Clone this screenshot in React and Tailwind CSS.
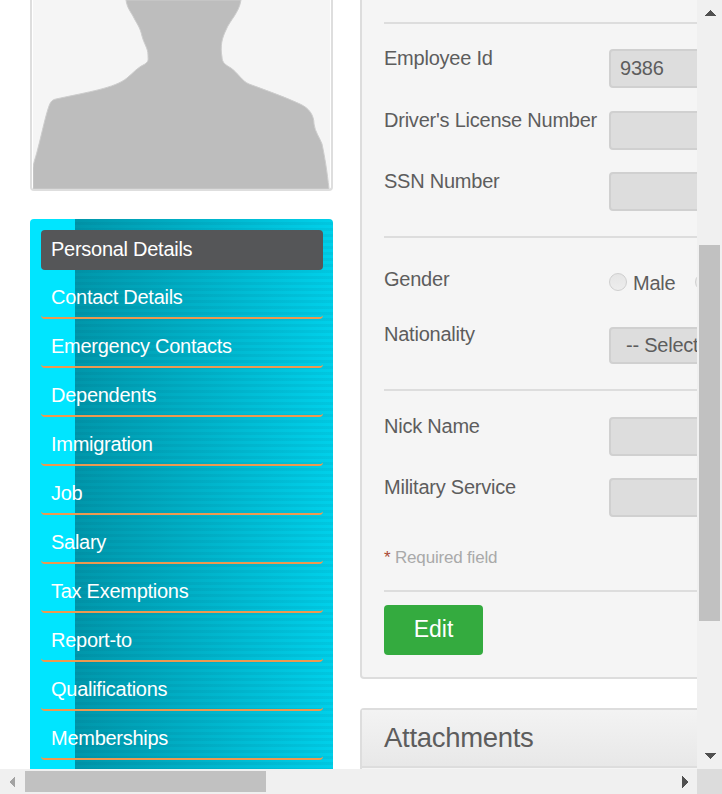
import React from "react";

const menu = [
  "Contact Details",
  "Emergency Contacts",
  "Dependents",
  "Immigration",
  "Job",
  "Salary",
  "Tax Exemptions",
  "Report-to",
  "Qualifications",
  "Memberships",
];

function Photo() {
  return (
    <div className="h-[191px] w-[303px] rounded-b-[4px] border-2 border-t-0 border-[#dedede] bg-white px-px">
      <svg width="297" height="189" viewBox="33 0 297 189" className="block" preserveAspectRatio="none">
        <rect x="33" y="0" width="298" height="189" fill="#f5f5f5" />
        <path
          d="M126 0C127 8 131 12 134 18C137 24 140 27 142 36C144 44 148 48 148 55C148 60 149 61 145 64C138 67 133 73 127 78C115 88 88 92 56 99C51 100 50 103 48 109C44 122 41 137 38 148C36 157 34 160 33 168V189H329C327 171 325 158 322 144C320 138 315 132 314 124C314 115 309 108 300 104C285 97 265 90 249 84C242 81 238 73 231 68C226 65 222 63 222 57C220 46 222 38 226 30C230 20 239 13 241 0Z"
          fill="#bdbdbd" stroke="#cdcdcd" strokeWidth="1"
        />
      </svg>
    </div>
  );
}

function Sidebar() {
  return (
    <nav className="mt-7 h-[600px] w-[303px] rounded-[4px] bg-[linear-gradient(90deg,#00e5ff_45px,transparent_45px),repeating-linear-gradient(180deg,transparent_0px,transparent_3px,rgba(0,75,100,0.07)_3px,rgba(0,75,100,0.07)_6px),linear-gradient(90deg,#0096aa_45px,#00d0ea_303px)] pl-[11px] pr-[10px] pt-[11px] text-[20px] leading-[36px] tracking-[-0.27px] text-white">
      <div className="flex h-10 items-center rounded-[4px] bg-[#555658] px-[10px] pb-[2px]">Personal Details</div>
      {menu.map((item) => (
        <div key={item} className="mt-[9px] h-10 rounded-[4px] border-b-2 border-[#ee9950] px-[10px]">
          {item}
        </div>
      ))}
    </nav>
  );
}

function Field({ label, height, children }) {
  return (
    <div className={"flex items-start " + height}>
      <div className="w-[225px] shrink-0 whitespace-nowrap leading-[18px]">{label}</div>
      {children}
    </div>
  );
}

function Box({ children }) {
  return (
    <div className="h-[39px] w-[240px] shrink-0 rounded-[4px] border-2 border-[#d0d0d0] bg-[#dddddd] px-[9px] leading-[35px]">
      {children}
    </div>
  );
}

function Radio() {
  return (
    <span className="block h-[18px] w-[18px] shrink-0 rounded-full border border-[#cfcfcf] bg-linear-to-b from-[#e5e5e5] to-[#ededed]" />
  );
}

function Details() {
  return (
    <section className="h-[679px] w-[600px] rounded-b-[4px] border-2 border-t-0 border-[#dddddd] bg-[#f5f5f5] pl-[22px] text-[20px] tracking-[-0.23px] text-[#5d5d5d]">
      <div className="h-6 border-b-2 border-[#dddddd]" />
      <div className="h-[214px] border-b-2 border-[#dddddd] pt-[25px]">
        <Field label="Employee Id" height="h-[62px]"><Box>9386</Box></Field>
        <Field label="Driver's License Number" height="h-[61px]"><Box /></Field>
        <Field label="SSN Number" height="h-[39px]"><Box /></Field>
      </div>
      <div className="h-[153px] border-b-2 border-[#dddddd] pt-8">
        <Field label="Gender" height="h-[55px]">
          <div className="mt-[3px] flex items-start leading-[20px]">
            <Radio />
            <span className="ml-[6px] mr-5">Male</span>
            <Radio />
          </div>
        </Field>
        <Field label="Nationality" height="h-[39px]">
          <div className="mt-[2px] h-[37px] w-[240px] shrink-0 rounded-[4px] border-2 border-[#d0d0d0] bg-[#dddddd] pl-[15px] leading-[33px]">
            -- Select --
          </div>
        </Field>
      </div>
      <div className="h-[201px] border-b-2 border-[#dddddd] pt-[26px]">
        <Field label="Nick Name" height="h-[61px]"><Box /></Field>
        <Field label="Military Service" height="h-[70px]"><Box /></Field>
        <div className="text-[17px] leading-[20px] tracking-[-0.18px] text-[#a9a9a9]">
          <span className="text-[#aa4935]">*</span> Required field
        </div>
      </div>
      <button className="mt-[13px] block h-[50px] w-[99px] rounded-[4px] bg-[#34ab3f] pb-[2px] text-[23px] leading-[46px] tracking-normal text-white">
        Edit
      </button>
    </section>
  );
}

function Attachments() {
  return (
    <section className="mt-[29px] h-[100px] w-[600px] rounded-t-[4px] border-2 border-[#dddddd] bg-[#f5f5f5]">
      <h2 className="h-[58px] border-b-2 border-[#dddddd] bg-linear-to-b from-[#f3f3f3] to-[#e8e8e8] pl-[22px] text-[27.5px] leading-[56px] tracking-[-0.3px] text-[#5d5d5d]">
        Attachments
      </h2>
    </section>
  );
}

function Arrow({ points, dim }) {
  return (
    <svg width="12" height="12" viewBox="0 0 12 12" className="block shrink-0" shapeRendering="crispEdges">
      <polygon points={points} fill={dim ? "#a3a3a3" : "#505050"} />
    </svg>
  );
}

export default function App() {
  return (
    <div className="grid h-[794px] w-[722px] grid-cols-[697px_25px] grid-rows-[769px_25px] overflow-hidden bg-white font-['Liberation_Sans',Arial,sans-serif]">
      <main className="flex h-[769px] gap-[27px] overflow-hidden pl-[30px]">
        <div className="w-[303px] shrink-0">
          <Photo />
          <Sidebar />
        </div>
        <div className="w-[600px] shrink-0">
          <Details />
          <Attachments />
        </div>
      </main>
      <div className="flex flex-col items-center bg-[#f0f0f0] pt-[7px]">
        <Arrow points="0,9 6,3 12,9" />
        <div className="mr-px mt-[226px] h-[376px] w-[21px] shrink-0 bg-[#c1c1c1]" />
        <div className="mt-[130px]"><Arrow points="0,2 12,2 6,8" /></div>
      </div>
      <div className="flex items-center bg-[#f0f0f0] pl-[6px]">
        <Arrow points="9,0 9,12 3,6" dim />
        <div className="ml-[7px] h-[21px] w-[241px] bg-[#c1c1c1]" />
        <div className="ml-[413px]"><Arrow points="3,0 3,12 9,6" /></div>
      </div>
      <div className="bg-[#dcdcdc]" />
    </div>
  );
}
